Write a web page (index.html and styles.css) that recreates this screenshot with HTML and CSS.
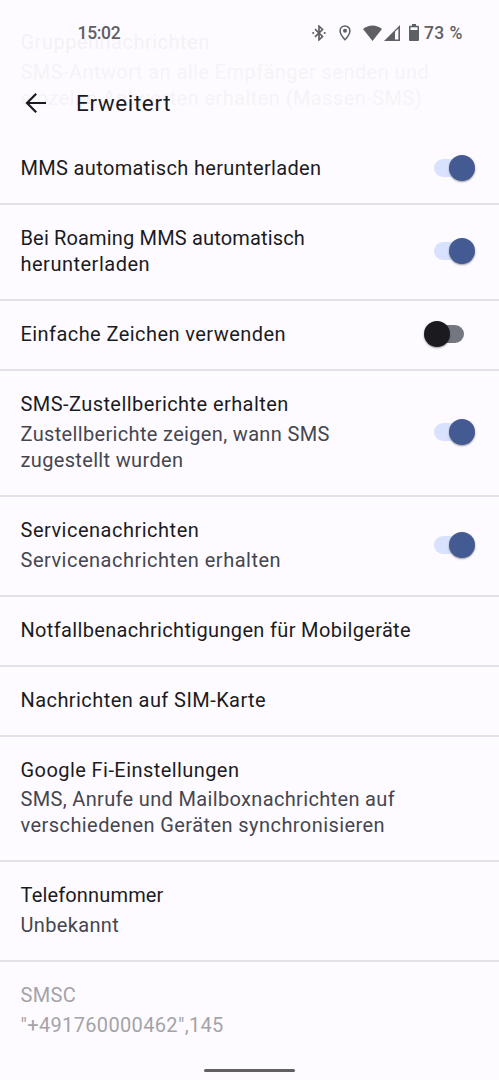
FILE: index.html
```html
<!DOCTYPE html>
<html lang="de">
<head>
<meta charset="utf-8">
<title>Erweitert</title>
<link rel="stylesheet" href="styles.css">
</head>
<body>
<div class="screen">
  <div class="underlay" aria-hidden="true">
    <div class="title wider">Gruppennachrichten</div>
    <div class="summary">SMS-Antwort an alle Empfänger senden und<br>einzelne Antworten erhalten (Massen-SMS)</div>
  </div>
  <header class="header">
    <div class="status">
      <span class="clock">15:02</span>
      <div class="indicators">
        <svg class="bluetooth" width="14" height="16" viewBox="0 0 14 16"><path d="M3 4.2 10.5 11.5 7 14.8V1.2L10.5 4.5 3 11.8" fill="none" stroke="currentColor" stroke-width="1.7"/><circle cx="1.2" cy="8" r="1.1" fill="currentColor"/><circle cx="12.7" cy="8" r="1.1" fill="currentColor"/></svg>
        <svg class="location" width="12" height="16" viewBox="0 0 12 16"><path d="M6 1C3.2 1 1.1 3.1 1.1 5.9 1.1 9.3 6 14.7 6 14.7S10.9 9.3 10.9 5.9C10.9 3.1 8.8 1 6 1Z" fill="none" stroke="currentColor" stroke-width="1.5"/><circle cx="6" cy="5.8" r="2" fill="currentColor"/></svg>
        <svg class="wifi" width="19" height="16" viewBox="0 0 19 16"><path d="M0 4Q4.2.5 9.5.5T19 4L9.5 16Z" fill="currentColor"/></svg>
        <svg class="signal" width="16" height="16" viewBox="0 0 16 16"><path d="M0 16 16 0V16Z" fill="currentColor"/><path d="M11 6.8 14.4 3.4V14.4H11Z" fill="#fdfbff"/></svg>
        <svg class="battery" width="10" height="17" viewBox="0 0 10 17"><path d="M3 0H7V1.7H9Q10 1.7 10 2.7V16Q10 17 9 17H1Q0 17 0 16V2.7Q0 1.7 1 1.7H3Z" fill="currentColor"/><path d="M1.5 3.3H8.5V6H1.5Z" fill="#fdfbff"/></svg>
        <span class="percent">73 %</span>
      </div>
    </div>
    <div class="appbar">
      <svg width="22" height="22" viewBox="0 0 22 22"><path d="M21 11H2.5M11.2 1.8 2 11l9.2 9.2" fill="none" stroke="currentColor" stroke-width="2.2"/></svg>
      <h1 class="heading">Erweitert</h1>
    </div>
  </header>
  <main class="list">
    <section class="row"><div><div class="title snug">MMS automatisch herunterladen</div></div><span class="switch on"></span></section>
    <section class="row"><div><div class="title"><span class="tight">Bei Roaming MMS automatisch</span><br><span class="wider">herunterladen</span></div></div><span class="switch on"></span></section>
    <section class="row"><div><div class="title">Einfache Zeichen verwenden</div></div><span class="switch"></span></section>
    <section class="row"><div><div class="title">SMS-Zustellberichte erhalten</div><div class="summary snug">Zustellberichte zeigen, wann SMS<br>zugestellt wurden</div></div><span class="switch on"></span></section>
    <section class="row"><div><div class="title wider">Servicenachrichten</div><div class="summary wider">Servicenachrichten erhalten</div></div><span class="switch on"></span></section>
    <section class="row"><div><div class="title snug">Notfallbenachrichtigungen für Mobilgeräte</div></div></section>
    <section class="row"><div><div class="title">Nachrichten auf SIM-Karte</div></div></section>
    <section class="row"><div><div class="title">Google Fi-Einstellungen</div><div class="summary"><span class="snug">SMS, Anrufe und Mailboxnachrichten auf</span><br>verschiedenen Geräten synchronisieren</div></div></section>
    <section class="row"><div><div class="title tight">Telefonnummer</div><div class="summary snug">Unbekannt</div></div></section>
    <section class="row disabled"><div><div class="title snug">SMSC</div><div class="summary snug">"+491760000462",145</div></div></section>
  </main>
  <div class="home-handle"></div>
</div>
</body>
</html>
```
FILE: styles.css
```css
* { box-sizing: border-box; }
body { margin: 0; background: #fdfbff; font-family: Roboto, "Noto Sans", sans-serif; color: #1b1b1f; }
.screen { position: relative; height: 1080px; overflow: hidden; display: flex; flex-direction: column; }
.underlay { position: absolute; left: 20.5px; top: 29px; opacity: .04; }
.header { position: relative; height: 135px; flex: none; }
.status { height: 65px; padding: 0 36px 0 77.5px; display: flex; align-items: center; justify-content: space-between; color: #5f6063; font-size: 17.5px; font-weight: 500; }
.clock { letter-spacing: -.3px; }
.indicators { display: flex; align-items: center; }
.location { margin-left: 13px; }
.wifi { margin-left: 12px; }
.signal { margin-left: 2px; }
.battery { margin-left: 9px; }
.percent { width: 39px; margin-left: 5px; white-space: nowrap; letter-spacing: .4px; }
.appbar { display: flex; align-items: center; gap: 29px; padding: 0 25px; height: 76px; }
.heading { margin: 0; font-size: 22.5px; font-weight: 400; letter-spacing: .6px; }
.list { flex: none; }
.row { display: flex; justify-content: space-between; align-items: center; padding: 20px 24.5px 22px 20.5px; border-bottom: 2px solid #e3e1e5; }
.row:last-child { border-bottom: 0; }
.title, .summary { font-size: 20px; font-weight: 400; line-height: 26px; white-space: nowrap; letter-spacing: .43px; }
.summary { margin-top: 3.8px; color: #45464f; }
.snug { letter-spacing: .34px; }
.tight { letter-spacing: .16px; }
.wider { letter-spacing: .5px; }
.disabled .title, .disabled .summary { color: #a4a3a7; }
.switch { position: relative; width: 40px; height: 26px; flex: none; display: flex; align-items: center; }
.switch::before { content: ""; width: 30px; height: 18px; border-radius: 9px; background: #74777f; margin-left: -.5px; }
.switch::after { content: ""; position: absolute; left: -11px; top: 0; width: 26px; height: 26px; border-radius: 50%; background: #1b1b1f; box-shadow: 0 1px 2px #0006; }
.switch.on::before { background: #d8e2ff; }
.switch.on::after { left: 14px; background: #435b92; }
.home-handle { position: absolute; left: 204px; top: 1069px; width: 91px; height: 3px; border-radius: 2px; background: #606063; }
```
